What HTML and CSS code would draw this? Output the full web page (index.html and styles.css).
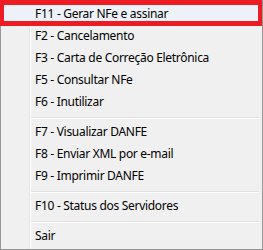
FILE: index.html
```html
<!DOCTYPE html>
<html lang="pt-BR">
<head>
    <meta charset="UTF-8">
    <title>Menu NFe</title>
    <link rel="stylesheet" href="styles.css">
</head>
<body>
    <div class="menu">
        <ul class="menu-list">
            <li class="item active">F11 - Gerar NFe e assinar</li>
            <li class="item">F2 - Cancelamento</li>
            <li class="item">F3 - Carta de Correção Eletrônica</li>
            <li class="item">F5 - Consultar NFe</li>
            <li class="item">F6 - Inutilizar</li>
            <li class="separator"></li>
            <li class="item">F7 - Visualizar DANFE</li>
            <li class="item">F8 - Enviar XML por e-mail</li>
            <li class="item">F9 - Imprimir DANFE</li>
            <li class="separator"></li>
            <li class="item">F10 - Status dos Servidores</li>
            <li class="separator"></li>
            <li class="item">Sair</li>
        </ul>
        <div class="mark"></div>
    </div>
</body>
</html>
```

FILE: styles.css
```css
body, html {
    margin: 0;
    padding: 0;
    background: #f0f0f0;
    font-family: 'Noto Sans', 'Open Sans', sans-serif;
    font-size: 12px;
    color: #000;
}

.menu {
    position: relative;
    box-sizing: border-box;
    width: 263px;
    height: 250px;
    border: 1px solid #979797;
    padding: 2px;
    background: linear-gradient(to right, transparent 28px, #e2e3e3 28px 29px, #fff 29px 30px, transparent 30px) #f0f0f0;
}

.menu-list {
    list-style: none;
    margin: 0;
    padding: 0;
}

.item {
    height: 22px;
    line-height: 22px;
    padding-left: 32px;
    letter-spacing: -0.3px;
    white-space: nowrap;
}

.item.active {
    background: #edf2f9;
}

.separator {
    height: 8px;
    margin: 0 1px 0 28px;
    background: linear-gradient(to bottom, transparent 4px, #e0e0e0 4px 5px, #fff 5px 6px, transparent 6px);
}

/* marcação vermelha sobre o primeiro item */
.mark {
    position: absolute;
    top: -1px;
    left: -1px;
    width: 262px;
    height: 26px;
    box-sizing: border-box;
    border: 5px solid #ed1c24;
    border-left-width: 4px;
    border-right-width: 4px;
}
```
